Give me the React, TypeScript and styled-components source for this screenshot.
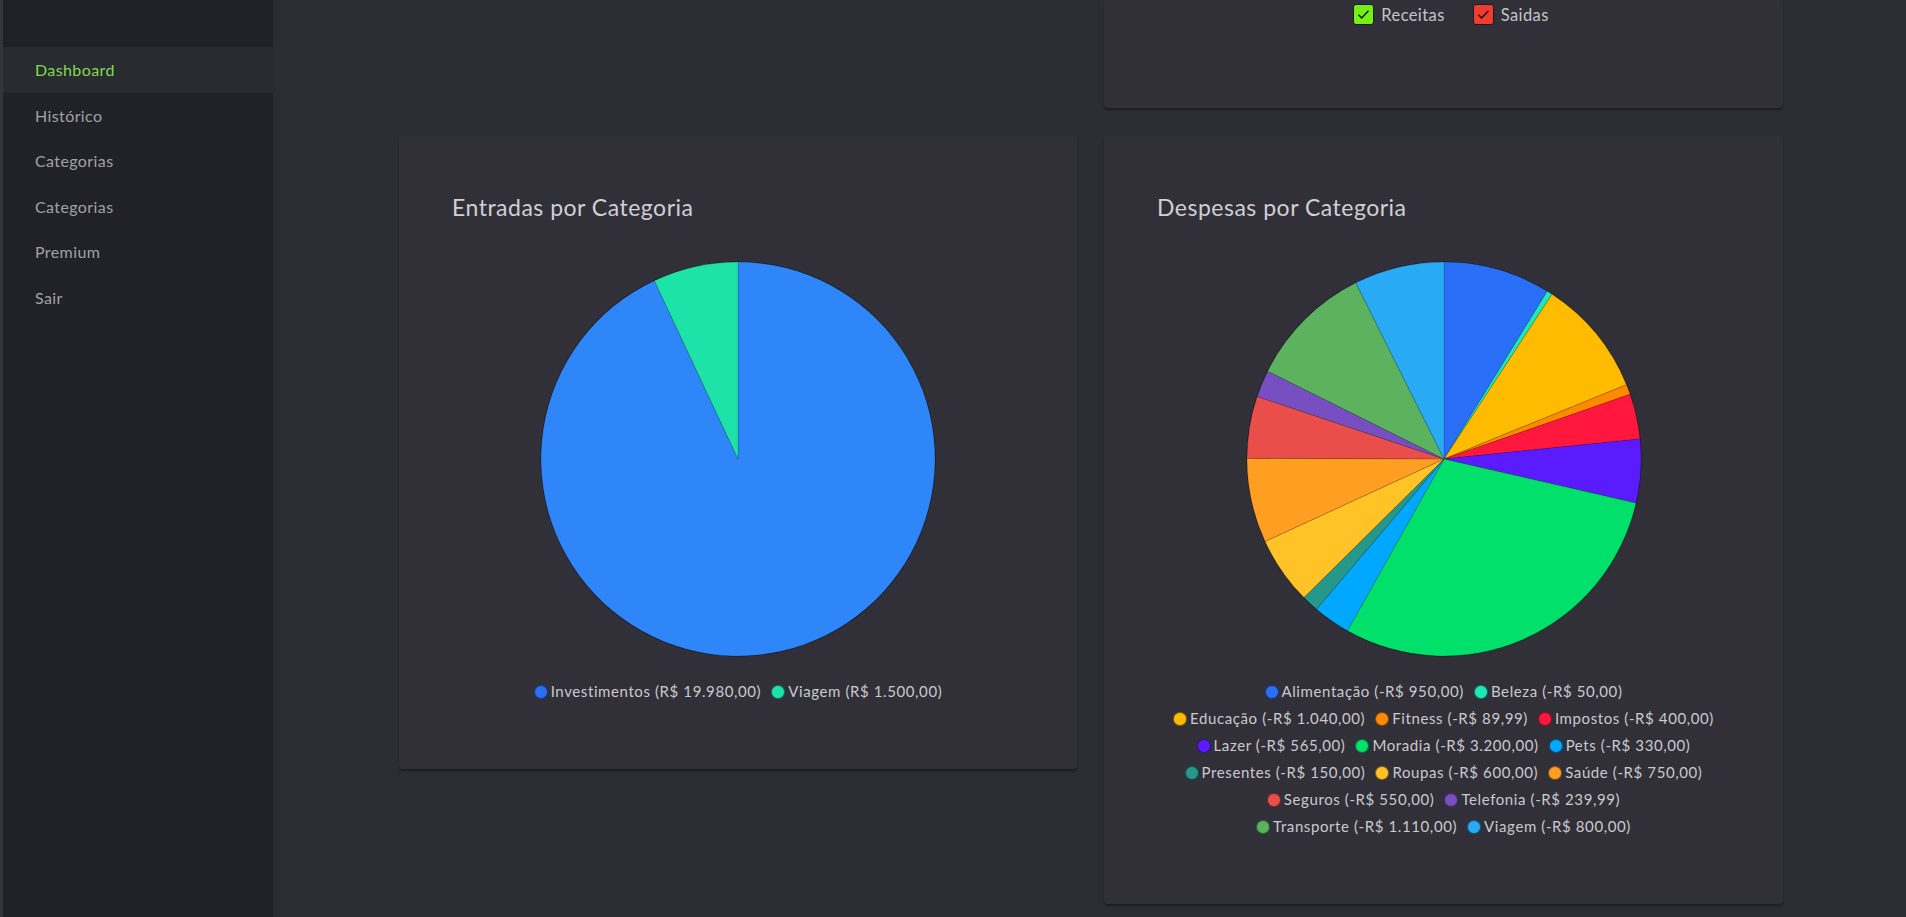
import React from 'react';
import styled, { createGlobalStyle } from 'styled-components';

const GlobalStyle = createGlobalStyle`
  html, body {
    margin: 0;
    padding: 0;
    background: #2c2c35;
    font-family: Lato, "Liberation Sans", sans-serif;
    overflow: hidden;
  }
`;

const Layout = styled.div`
  display: flex;
  width: 1906px;
  height: 917px;
  background: #2c2c35;
`;

const Sidebar = styled.aside`
  width: 270px;
  flex-shrink: 0;
  background: #212128;
  border-left: 3px solid #34343a;
  display: flex;
  flex-direction: column;
`;

const SidebarTop = styled.div`
  height: 47px;
  background: #202027;
`;

const NavItem = styled.a<{ $active?: boolean }>`
  display: flex;
  align-items: center;
  height: 45.5px;
  padding-left: 32px;
  font-size: 16px;
  letter-spacing: 0.4px;
  color: ${(p) => (p.$active ? '#7edc4c' : '#a2a2aa')};
  background: ${(p) => (p.$active ? '#2a2a31' : 'transparent')};
  text-decoration: none;
  cursor: pointer;
`;

const Main = styled.main`
  flex: 1;
  display: flex;
  padding-left: 126px;
`;

const Grid = styled.div`
  width: 1384px;
  display: grid;
  grid-template-columns: 678px 679px;
  grid-template-rows: 108px auto;
  column-gap: 27px;
  row-gap: 28px;
  align-items: start;
`;

const Card = styled.section`
  background: #313038;
  border-radius: 4px;
  box-shadow: 0 2px 2px rgba(0, 0, 0, 0.35);
  padding: 56px 53px 64px 53px;
  display: flex;
  flex-direction: column;
  align-items: center;
`;

const TopCard = styled(Card)`
  grid-column: 2;
  height: 108px;
  box-sizing: border-box;
  padding: 4px 0 0;
  border-radius: 0 0 4px 4px;
`;

const Spacer = styled.div`
  grid-column: 1;
`;

const Title = styled.h2`
  align-self: stretch;
  margin: 0 0 39px;
  font-size: 23px;
  line-height: 30px;
  font-weight: 400;
  letter-spacing: 0.5px;
  color: #cfcfd5;
`;

const ToggleRow = styled.div`
  display: flex;
  gap: 28px;
  align-items: center;
  margin-left: 15px;
`;

const Toggle = styled.label`
  display: flex;
  align-items: center;
  gap: 7px;
  font-size: 16.5px;
  letter-spacing: 0.4px;
  color: #c4c4ca;
`;

const CheckBox = styled.span<{ $color: string }>`
  width: 21px;
  height: 21px;
  flex-shrink: 0;
  box-sizing: border-box;
  border-radius: 3px;
  border: 1px solid #1b1b1f;
  background: ${(p) => p.$color};
  display: flex;
  align-items: center;
  justify-content: center;
`;

const Legend = styled.div`
  margin-top: 21px;
  display: flex;
  flex-direction: column;
  align-items: center;
`;

const LegendRow = styled.ul`
  list-style: none;
  margin: 0;
  padding: 0;
  display: flex;
  justify-content: center;
  column-gap: 10px;
`;

const LegendItem = styled.li`
  display: flex;
  align-items: center;
  gap: 3px;
  line-height: 27px;
  font-size: 15px;
  letter-spacing: 0.6px;
  color: #c9c9ce;
  white-space: nowrap;
`;

const Dot = styled.span<{ $color: string }>`
  width: 14px;
  height: 14px;
  border-radius: 50%;
  box-sizing: border-box;
  border: 1px solid rgba(0, 0, 0, 0.45);
  background: ${(p) => p.$color};
`;

type Slice = { label: string; value: number; color: string; dot?: string };

const entradas: Slice[] = [
  { label: 'Investimentos (R$ 19.980,00)', value: 19980, color: '#2e86f8', dot: '#2a6ff5' },
  { label: 'Viagem (R$ 1.500,00)', value: 1500, color: '#1de3a8', dot: '#1de3a8' },
];

const despesas: Slice[] = [
  { label: 'Alimentação (-R$ 950,00)', value: 950, color: '#2a6ff7' },
  { label: 'Beleza (-R$ 50,00)', value: 50, color: '#1de9b6' },
  { label: 'Educação (-R$ 1.040,00)', value: 1040, color: '#ffbb00' },
  { label: 'Fitness (-R$ 89,99)', value: 89.99, color: '#ff8a00' },
  { label: 'Impostos (-R$ 400,00)', value: 400, color: '#ff173e' },
  { label: 'Lazer (-R$ 565,00)', value: 565, color: '#5a1cff' },
  { label: 'Moradia (-R$ 3.200,00)', value: 3200, color: '#00e06a' },
  { label: 'Pets (-R$ 330,00)', value: 330, color: '#00a8ff' },
  { label: 'Presentes (-R$ 150,00)', value: 150, color: '#25988a' },
  { label: 'Roupas (-R$ 600,00)', value: 600, color: '#ffc328' },
  { label: 'Saúde (-R$ 750,00)', value: 750, color: '#ff9f22' },
  { label: 'Seguros (-R$ 550,00)', value: 550, color: '#e94e4b' },
  { label: 'Telefonia (-R$ 239,99)', value: 239.99, color: '#784fc0' },
  { label: 'Transporte (-R$ 1.110,00)', value: 1110, color: '#5cb25f' },
  { label: 'Viagem (-R$ 800,00)', value: 800, color: '#28aaf4' },
];

const chunk = (data: Slice[], sizes: number[]) => {
  const rows: Slice[][] = [];
  let i = 0;
  sizes.forEach((n) => {
    rows.push(data.slice(i, i + n));
    i += n;
  });
  return rows;
};

const point = (cx: number, cy: number, r: number, a: number) =>
  `${cx + r * Math.cos(a)} ${cy + r * Math.sin(a)}`;

const PieChart: React.FC<{ data: Slice[] }> = ({ data }) => {
  const size = 396;
  const c = size / 2;
  const r = 197;
  const total = data.reduce((s, d) => s + d.value, 0);
  let angle = -Math.PI / 2;
  return (
    <svg width={size} height={size} viewBox={`0 0 ${size} ${size}`}>
      <circle cx={c} cy={c} r={r + 0.5} fill="#15151a" />
      {data.map((d) => {
        const a0 = angle;
        const a1 = angle + (d.value / total) * Math.PI * 2;
        angle = a1;
        const large = a1 - a0 > Math.PI ? 1 : 0;
        return (
          <path
            key={d.label}
            d={`M ${c} ${c} L ${point(c, c, r, a0)} A ${r} ${r} 0 ${large} 1 ${point(c, c, r, a1)} Z`}
            fill={d.color}
            stroke="rgba(20,20,30,0.25)"
            strokeWidth={0.6}
          />
        );
      })}
    </svg>
  );
};

const Check = () => (
  <svg width="15" height="15" viewBox="0 0 24 24" fill="none" stroke="#111" strokeWidth="2.3">
    <path d="M4 12.5l5 5L20 6" />
  </svg>
);

const ChartCard: React.FC<{ title: string; data: Slice[]; rows: number[] }> = ({ title, data, rows }) => (
  <Card>
    <Title>{title}</Title>
    <PieChart data={data} />
    <Legend>
      {chunk(data, rows).map((row, i) => (
        <LegendRow key={i}>
          {row.map((d) => (
            <LegendItem key={d.label}>
              <Dot $color={d.dot ?? d.color} />
              {d.label}
            </LegendItem>
          ))}
        </LegendRow>
      ))}
    </Legend>
  </Card>
);

const navItems = ['Dashboard', 'Histórico', 'Categorias', 'Categorias', 'Premium', 'Sair'];

export default function App() {
  return (
    <>
      <GlobalStyle />
      <Layout>
        <Sidebar>
          <SidebarTop />
          {navItems.map((item, i) => (
            <NavItem key={i} $active={i === 0}>
              {item}
            </NavItem>
          ))}
        </Sidebar>
        <Main>
          <Grid>
            <Spacer />
            <TopCard>
              <ToggleRow>
                <Toggle>
                  <CheckBox $color="#76ef14">
                    <Check />
                  </CheckBox>
                  Receitas
                </Toggle>
                <Toggle>
                  <CheckBox $color="#f03b2f">
                    <Check />
                  </CheckBox>
                  Saidas
                </Toggle>
              </ToggleRow>
            </TopCard>
            <ChartCard title="Entradas por Categoria" data={entradas} rows={[2]} />
            <ChartCard title="Despesas por Categoria" data={despesas} rows={[2, 3, 3, 3, 2, 2]} />
          </Grid>
        </Main>
      </Layout>
    </>
  );
}
